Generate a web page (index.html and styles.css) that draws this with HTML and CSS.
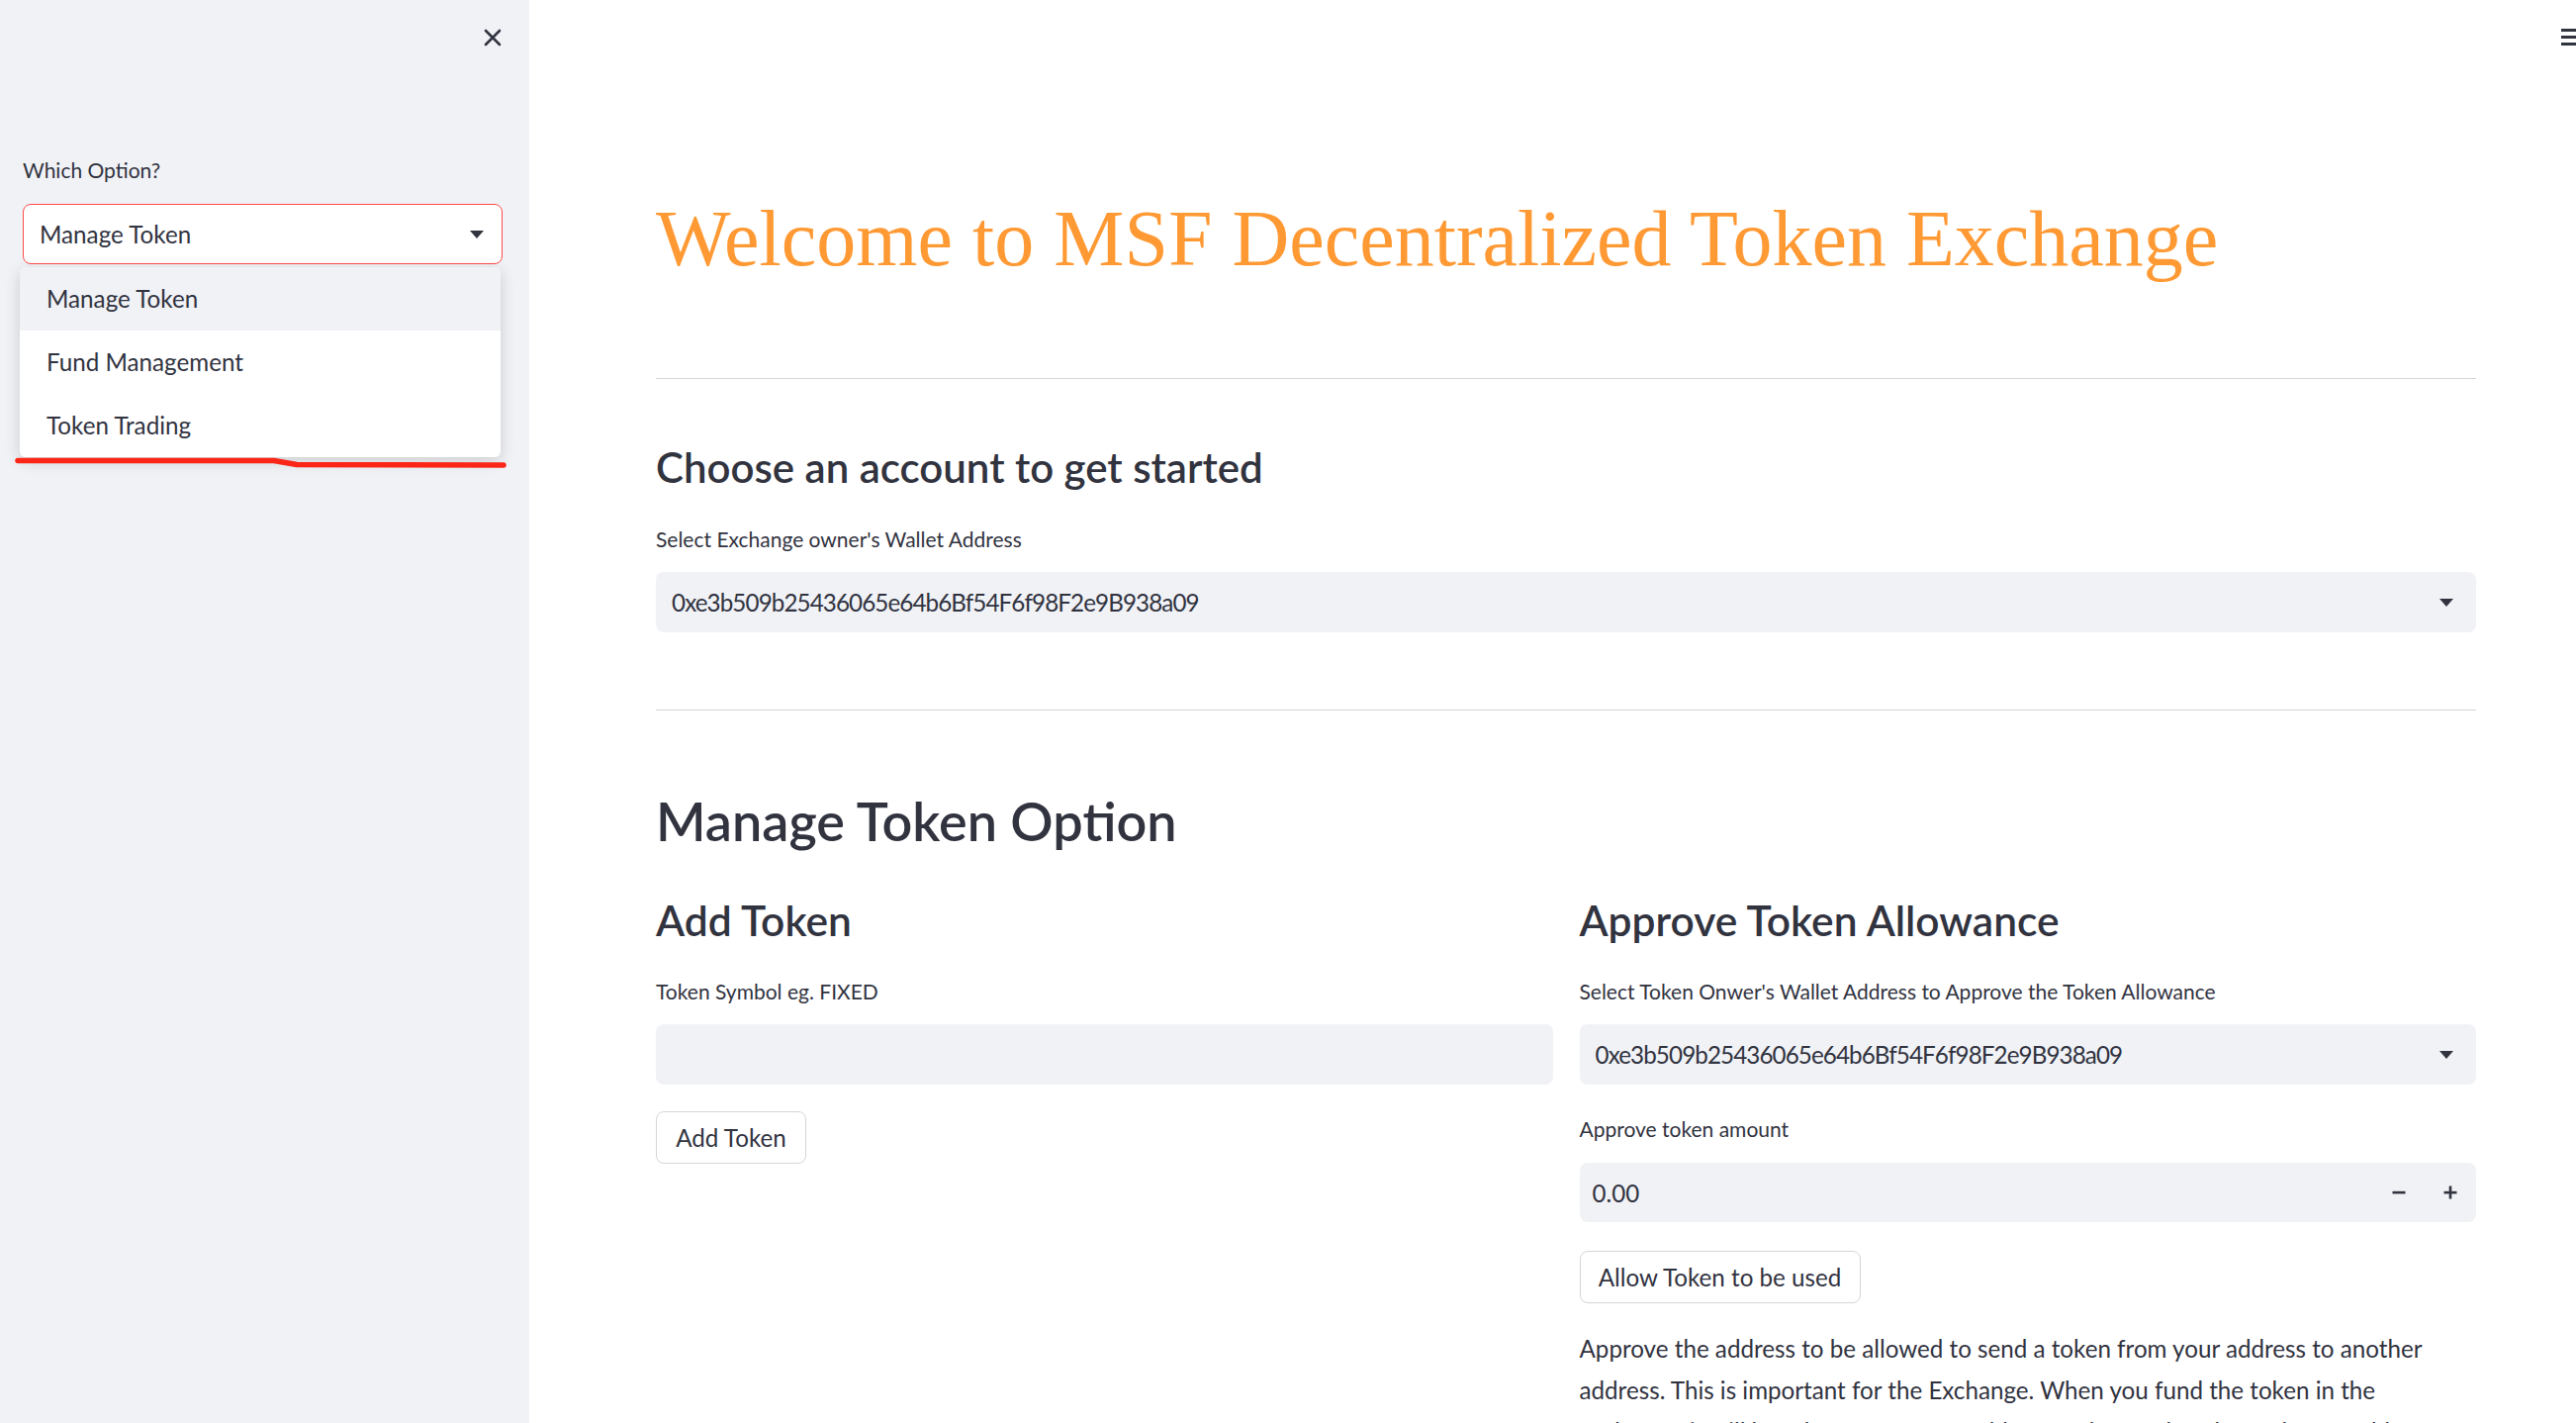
FILE: index.html
```html
<!DOCTYPE html>
<html lang="en">
<head>
<meta charset="utf-8">
<title>MSF Decentralized Token Exchange</title>
<link rel="stylesheet" href="styles.css">
</head>
<body>
<div class="app">
  <aside class="sidebar">
    <div class="sidebar-head">
      <button class="close-btn" aria-label="Close sidebar">
        <svg viewBox="0 0 18 18" width="18" height="18"><path d="M2 2 L16 16 M16 2 L2 16" stroke="#31333f" stroke-width="2.6" stroke-linecap="round"/></svg>
      </button>
    </div>
    <div class="sidebar-body">
      <label class="field-label">Which Option?</label>
      <div class="select select-open">
        <span class="select-value">Manage Token</span>
        <span class="caret"></span>
      </div>
    </div>
    <ul class="menu">
      <li class="menu-item active">Manage Token</li>
      <li class="menu-item">Fund Management</li>
      <li class="menu-item">Token Trading</li>
    </ul>
    <svg class="scribble" width="535" height="25" viewBox="0 0 535 25"><path d="M18 10.5 L277 10.5 L300 14.5 L509 15" fill="none" stroke="#fb2617" stroke-width="5.5" stroke-linecap="round" stroke-linejoin="round"/></svg>
  </aside>

  <main class="main">
    <div class="hamburger"><span></span><span></span><span></span></div>

    <h1 class="title">Welcome to MSF Decentralized Token Exchange</h1>
    <hr class="divider divider-first">

    <h3 class="subheading">Choose an account to get started</h3>
    <label class="field-label">Select Exchange owner's Wallet Address</label>
    <div class="select">
      <span class="select-value address">0xe3b509b25436065e64b6Bf54F6f98F2e9B938a09</span>
      <span class="caret"></span>
    </div>

    <hr class="divider divider-second">

    <h2 class="section-heading">Manage Token Option</h2>

    <div class="columns">
      <section class="col">
        <h3 class="col-heading">Add Token</h3>
        <label class="field-label">Token Symbol eg. FIXED</label>
        <div class="text-input"></div>
        <button class="btn btn-add">Add Token</button>
      </section>

      <section class="col">
        <h3 class="col-heading">Approve Token Allowance</h3>
        <label class="field-label">Select Token Onwer's Wallet Address to Approve the Token Allowance</label>
        <div class="select select-col">
          <span class="select-value address">0xe3b509b25436065e64b6Bf54F6f98F2e9B938a09</span>
          <span class="caret"></span>
        </div>
        <label class="field-label label-amount">Approve token amount</label>
        <div class="number-input">
          <span class="number-value">0.00</span>
          <span class="step">
            <svg width="14" height="14" viewBox="0 0 14 14"><rect x="0.5" y="5.8" width="13" height="2.6" fill="#31333f"/></svg>
          </span>
          <span class="step">
            <svg width="14" height="14" viewBox="0 0 14 14"><rect x="0.5" y="5.8" width="13" height="2.6" fill="#31333f"/><rect x="5.7" y="0.5" width="2.6" height="13" fill="#31333f"/></svg>
          </span>
        </div>
        <button class="btn btn-allow">Allow Token to be used</button>
        <p class="body-text">Approve the address to be allowed to send a token from your address to another address. This is important for the Exchange. When you fund the token in the exchange, it will be taken out of your address and moved to the exchange address.</p>
      </section>
    </div>
  </main>
</div>
</body>
</html>
```

FILE: styles.css
```css
* { box-sizing: border-box; }

html, body {
  margin: 0;
  height: 100%;
}

body {
  font-family: Lato, "Noto Sans", sans-serif;
  color: #31333f;
  background: #ffffff;
  overflow: hidden;
}

.app {
  display: flex;
  height: 1438px;
}

/* ---------- Sidebar ---------- */
.sidebar {
  position: relative;
  flex: 0 0 535px;
  background: #f0f2f6;
}

.sidebar-head {
  display: flex;
  justify-content: flex-end;
  padding: 29px 28px 0 0;
}

.close-btn {
  width: 18px;
  height: 18px;
  padding: 0;
  border: 0;
  background: none;
  display: block;
}

.close-btn svg { display: block; }

.sidebar-body {
  padding: 0 27px 0 23px;
}

.sidebar-body .field-label { margin-top: 108px; }

.field-label {
  display: block;
  font-size: 21px;
  line-height: 33px;
  color: #31333f;
}

.select {
  display: flex;
  align-items: center;
  justify-content: space-between;
  height: 61px;
  margin-top: 17px;
  padding: 0 23px 0 16px;
  border-radius: 8px;
  background: #f0f2f6;
  font-size: 24.2px;
}

.address { letter-spacing: -0.9px; }

.select-open {
  margin-top: 18px;
  padding: 0 18px 0 16px;
  background: #ffffff;
  border: 1.5px solid #ff4b4b;
}

.caret {
  width: 0;
  height: 0;
  border-left: 7px solid transparent;
  border-right: 7px solid transparent;
  border-top: 8px solid #31333f;
}

.menu {
  position: absolute;
  top: 270px;
  left: 20px;
  width: 486px;
  margin: 0;
  padding: 0;
  list-style: none;
  background: #ffffff;
  border-radius: 6px;
  box-shadow: 0 4px 16px rgba(0, 0, 0, 0.16);
  overflow: hidden;
}

.menu-item {
  height: 64px;
  line-height: 64px;
  padding-left: 27px;
  font-size: 24.2px;
}

.menu-item.active { background: #f0f2f6; }

.scribble {
  position: absolute;
  left: 0;
  top: 455px;
}

/* ---------- Main ---------- */
.main {
  position: relative;
  flex: 1;
  padding: 0 101px 0 128px;
}

.hamburger {
  position: absolute;
  top: 29px;
  right: 0;
  width: 15px;
  display: flex;
  flex-direction: column;
  gap: 4px;
  overflow: hidden;
}

.hamburger span {
  display: block;
  height: 3px;
  width: 22px;
  background: #31333f;
}

.title {
  margin: 188px 0 0;
  font-family: "Liberation Serif", "Times New Roman", serif;
  font-weight: 400;
  font-size: 80px;
  line-height: 106px;
  color: #ff9933;
  white-space: nowrap;
}

.divider {
  height: 0;
  margin: 0;
  border: 0;
  border-top: 1px solid #d6d6d9;
}

.divider-first { margin-top: 88px; }
.divider-second { margin-top: 78px; }

.subheading {
  margin: 65px 0 0;
  font-size: 42px;
  line-height: 49px;
  font-weight: 600;
}

.subheading + .field-label { margin-top: 31px; }

.section-heading {
  margin: 80px 0 0;
  font-size: 54px;
  line-height: 64px;
  font-weight: 600;
}

.columns {
  display: grid;
  grid-template-columns: 1fr 1fr;
  column-gap: 27px;
  align-items: start;
}

.col-heading {
  margin: 43px 0 0;
  font-size: 42.5px;
  line-height: 49px;
  font-weight: 600;
}

.col-heading + .field-label { margin-top: 31px; }

.text-input {
  height: 61px;
  margin-top: 17px;
  border-radius: 8px;
  background: #f0f2f6;
}

.select-col { margin-top: 17px; }

.label-amount { margin-top: 28px; }

.number-input {
  display: flex;
  align-items: center;
  height: 60px;
  margin-top: 18px;
  padding-left: 13px;
  border-radius: 8px;
  background: #f0f2f6;
  font-size: 24.2px;
}

.number-value { flex: 1; }

.step {
  display: flex;
  align-items: center;
  justify-content: center;
  width: 52px;
  height: 100%;
}

.step svg { display: block; }

.btn {
  display: block;
  height: 53px;
  padding: 0 18px;
  border: 1px solid #d6d6d9;
  border-radius: 8px;
  background: #ffffff;
  color: #31333f;
  font-family: inherit;
  font-size: 24.2px;
}

.btn-add { margin-top: 27px; width: 152px; }
.btn-allow { margin-top: 29px; width: 284px; }

.body-text {
  max-width: 890px;
  margin: 25px 0 0;
  font-size: 24.2px;
  line-height: 42px;
}
```
